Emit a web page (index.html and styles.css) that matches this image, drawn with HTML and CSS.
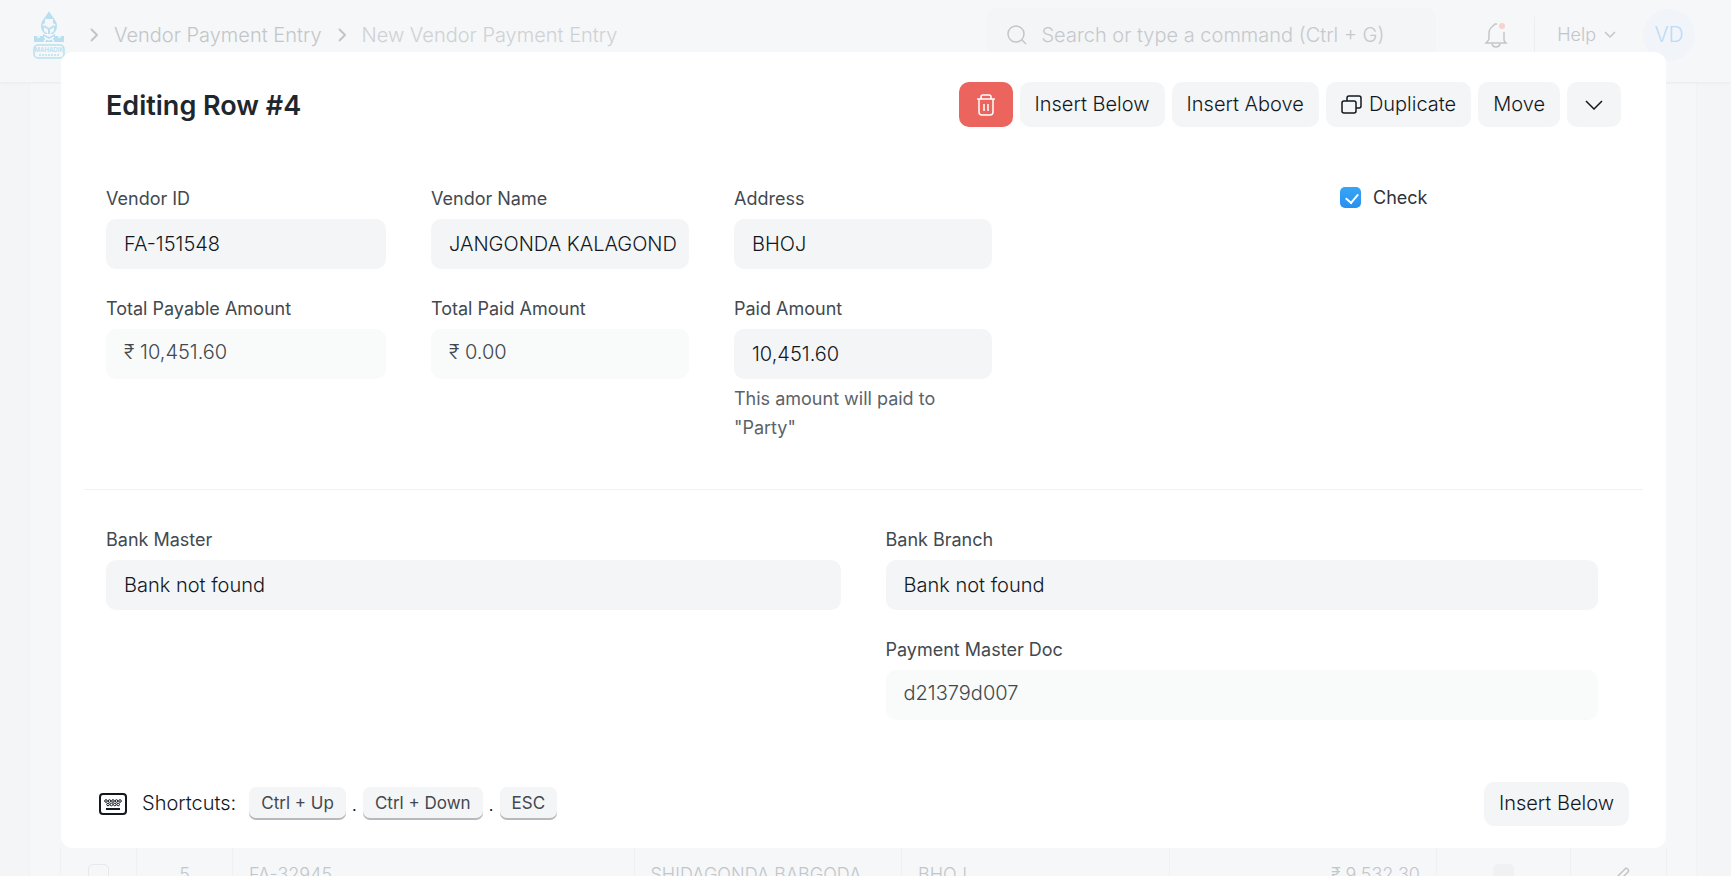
FILE: index.html
```html
<!DOCTYPE html>
<html lang="en">
<head>
<meta charset="utf-8">
<title>New Vendor Payment Entry</title>
<meta name="viewport" content="width=device-width, initial-scale=1">
<link rel="stylesheet" href="styles.css">
</head>
<body>
<header class="navbar">
  <a class="logo" href="#" aria-label="Home">
    <svg width="32" height="48" viewBox="0 0 32 48">
      <path d="M16 0C14 5 8 9 8 15c0 4 2 6 4 8h8c2-2 4-4 4-8C24 9 18 5 16 0z" fill="#b9dff0"/>
      <path d="M12 8h8v4l3 2-2 1v5l-5 4-5-4v-5l-2-1 3-2z" fill="#f5f7f8"/>
      <path d="M11 15l5 3 5-3M16 18v5" fill="none" stroke="#b9dff0" stroke-width="2"/>
      <path d="M1 25h9v-2l6 3 6-3v2h9v6H1z" fill="#b9dff0"/>
      <path d="M4 26h3M11 26l5 3 5-3M25 26h3M11 31l2-3M21 31l-2-3" stroke="#f5f7f8" fill="none"/>
      <rect x="1" y="34" width="30" height="13" rx="4" fill="none" stroke="#b9dff0"/>
      <text x="16" y="41" text-anchor="middle" class="logo-name">MAHADIK</text>
      <path d="M6 44h20" stroke="#c9e6f3" stroke-width="2" stroke-dasharray="2 1"/>
    </svg>
  </a>
  <nav class="crumbs">
    <svg class="sep" width="8" height="14" viewBox="0 0 8 14"><path d="M1 1l6 6-6 6"/></svg>
    <a href="#">Vendor Payment Entry</a>
    <svg class="sep" width="8" height="14" viewBox="0 0 8 14"><path d="M1 1l6 6-6 6"/></svg>
    <a href="#" class="current">New Vendor Payment Entry</a>
  </nav>
  <div class="search">
    <svg width="20" height="20" viewBox="0 0 20 20"><circle cx="9" cy="9" r="8"/><path d="M15 15l4 4"/></svg>
    <input type="search" aria-label="Search" placeholder="Search or type a command (Ctrl + G)">
  </div>
  <button class="bell" aria-label="Notifications">
    <svg width="24" height="26" viewBox="0 0 24 26"><path d="M13 2h-2C10 4 5 5 5 11v5c0 3-1 3-3 5h20c-2-2-2-2-2-5v-6M8 22c1 4 7 4 8 0"/><circle cx="18" cy="4" r="3" class="dot"/></svg>
  </button>
  <button class="help">Help
    <svg width="12" height="8" viewBox="0 0 12 8"><path d="M1 1l5 5 5-5"/></svg>
  </button>
  <button class="avatar">VD</button>
</header>

<main class="page">
  <section class="modal" role="dialog" aria-labelledby="dialog-title">
    <div class="modal-head">
      <h1 id="dialog-title">Editing Row #4</h1>
      <div class="actions">
        <button class="btn danger" aria-label="Delete">
          <svg width="20" height="22" viewBox="0 0 20 22"><path d="M1 5h18M5 5V3c0-1 1-2 2-2h6c1 0 2 1 2 2v2M3 5v13c0 2 1 3 3 3h8c2 0 3-1 3-3V5M8 10v7M12 10v7"/></svg>
        </button>
        <button class="btn">Insert Below</button>
        <button class="btn">Insert Above</button>
        <button class="btn">
          <svg width="21" height="19" viewBox="0 0 21 19"><rect x="1" y="6" width="14" height="12" rx="2"/><path d="M6 6V3c0-1 1-2 2-2h10c1 0 2 1 2 2v8c0 1-1 2-2 2h-3"/></svg>
          Duplicate
        </button>
        <button class="btn">Move</button>
        <button class="btn collapse" aria-label="Collapse">
          <svg width="18" height="10" viewBox="0 0 18 10"><path d="M1 1l8 8 8-8"/></svg>
        </button>
      </div>
    </div>

    <form>
      <div class="section five">
        <div class="column">
          <div class="field"><label for="vid">Vendor ID</label><input id="vid" type="text" value="FA-151548"></div>
          <div class="field"><span class="label">Total Payable Amount</span><div class="readonly">₹ 10,451.60</div></div>
        </div>
        <div class="column">
          <div class="field"><label for="vname">Vendor Name</label><input id="vname" type="text" value="JANGONDA KALAGOND"></div>
          <div class="field"><span class="label">Total Paid Amount</span><div class="readonly">₹ 0.00</div></div>
        </div>
        <div class="column">
          <div class="field"><label for="addr">Address</label><input id="addr" type="text" value="BHOJ"></div>
          <div class="field"><label for="paid">Paid Amount</label><input id="paid" type="text" value="10,451.60">
            <p class="hint">This amount will paid to "Party"</p></div>
        </div>
        <div class="column"></div>
        <div class="column">
          <label class="check"><input type="checkbox" checked>Check</label>
        </div>
      </div>
      <div class="section two">
        <div class="column">
          <div class="field"><label for="bank">Bank Master</label><input id="bank" type="text" value="Bank not found"></div>
        </div>
        <div class="column">
          <div class="field"><label for="branch">Bank Branch</label><input id="branch" type="text" value="Bank not found"></div>
          <div class="field"><span class="label">Payment Master Doc</span><div class="readonly">d21379d007</div></div>
        </div>
      </div>
    </form>

    <div class="modal-foot">
      <div class="shortcuts">
        <svg width="28" height="22" viewBox="0 0 28 22">
          <rect x="1" y="1" width="26" height="20" rx="3" stroke-width="2"/>
          <g stroke-width="1"><circle cx="7" cy="8" r="1.300"/><circle cx="10.500" cy="8" r="1.300"/><circle cx="14" cy="8" r="1.300"/><circle cx="17.500" cy="8" r="1.300"/><circle cx="21" cy="8" r="1.300"/><circle cx="9" cy="11.500" r="1.300"/><circle cx="12.400" cy="11.500" r="1.300"/><circle cx="15.800" cy="11.500" r="1.300"/><circle cx="19.200" cy="11.500" r="1.300"/></g>
          <path d="M7 16h14" stroke-width="2"/>
        </svg>
        <span class="caption">Shortcuts:</span>
        <kbd>Ctrl + Up</kbd><span class="point">.</span><kbd>Ctrl + Down</kbd><span class="point">.</span><kbd>ESC</kbd>
      </div>
      <button class="btn">Insert Below</button>
    </div>
  </section>

  <table class="rows">
    <colgroup><col class="c-pick"><col class="c-no"><col class="c-id"><col class="c-name"><col class="c-name"><col class="c-name"><col class="c-check"><col class="c-edit"></colgroup>
    <tbody>
      <tr>
        <td class="mid"><input type="checkbox" aria-label="Select row 5"></td>
        <td class="mid">5</td>
        <td>FA-32945</td>
        <td>SHIDAGONDA BABGODA</td>
        <td>BHOJ</td>
        <td class="num">₹ 9,532.30</td>
        <td class="mid"><input type="checkbox" class="filled" aria-label="Check" disabled></td>
        <td class="mid"><button class="edit" aria-label="Edit"><svg width="14" height="14" viewBox="0 0 14 14"><path d="M1 13l1-4 7-7c1-2 5 1 3 3l-7 7z"/></svg></button></td>
      </tr>
    </tbody>
  </table>
</main>
</body>
</html>
```
FILE: styles.css
```css
* { box-sizing: border-box; }

body {
  margin: 0;
  height: 100vh;
  overflow: hidden;
  display: flex;
  flex-direction: column;
  background: #f3f5f7;
  color: #12181e;
  font: 300 20px/30px Inter, "Liberation Sans", sans-serif;
}

button, input { font: inherit; color: inherit; }
button { border: 0; background: none; padding: 0; }
a { color: inherit; text-decoration: none; }
svg { fill: none; stroke: currentColor; stroke-width: 1.5; flex: none; display: block; }

/* Top bar */
.navbar {
  flex: none;
  height: 82px;
  padding: 8px 36px 20px 33px;
  display: flex;
  align-items: center;
  background: #f5f7f9;
  box-shadow: 0 1px 3px #e9ebed;
  color: #c3c6c8;
}
.logo svg { stroke: none; }
.logo-name { font-size: 6px; font-weight: 600; fill: #b9dff0; stroke: none; }
.crumbs { display: flex; align-items: center; gap: 16px; margin-left: 25px; margin-right: auto; white-space: nowrap; }
.crumbs .current { color: #cfd2d4; }
.sep { stroke-width: 2; }
.search {
  align-self: flex-start;
  width: 27%;
  height: 54px;
  display: flex;
  align-items: center;
  gap: 14px;
  padding: 0 20px;
  border-radius: 10px;
  background: #f3f5f7;
}
.search input { flex: 1; min-width: 0; border: 0; padding: 0; background: none; outline: 0; }
.search input::placeholder { color: #c6c9cb; opacity: 1; }
.bell { margin: 0 26px 0 48px; }
.bell .dot { fill: #fbd0cd; stroke: none; }
.help {
  display: flex;
  align-items: center;
  gap: 8px;
  height: 36px;
  padding-left: 22px;
  border-left: 1px solid #eceef0;
  font-size: 18px;
}
.avatar {
  width: 52px;
  height: 52px;
  margin-left: 27px;
  border-radius: 50%;
  background: #f1f5f9;
  color: #bcdcf6;
  font-size: 21px;
}

/* Page card behind the dialog */
.page {
  flex: 1 0 auto;
  margin: 2px 34px 0 29px;
  padding: 0 29px 0 30px;
  border: 1px solid #f0f2f3;
  border-width: 0 1px;
  background: #f5f7f9;
}

/* Dialog */
.modal {
  position: relative;
  margin: -32px 1px 0;
  padding: 30px 0 22px;
  border-radius: 12px;
  background: #fff;
}
.modal-head { display: flex; justify-content: space-between; align-items: center; padding: 0 45px; }
h1 { margin: 0; padding-top: 2px; font-size: 27px; font-weight: 600; color: #1f272e; }
.actions { display: flex; gap: 7px; }
.btn {
  display: flex;
  align-items: center;
  gap: 7px;
  height: 45px;
  padding: 0 15px 1px;
  border-radius: 10px;
  background: #f4f5f6;
  white-space: nowrap;
}
.danger { padding: 0 17px; background: #ec645e; color: #fff; }
.collapse { padding: 0 18px; }

.section { display: grid; margin: 0 23px; padding: 35px 22px 22px; }
.five { grid-template-columns: repeat(5, 1fr); margin-top: 22px; }
.two { grid-template-columns: repeat(2, 1fr); border-top: 1px solid #f1f2f4; }
.column { min-width: 0; padding: 0 23px 0 22px; }
.column:first-child { padding-left: 0; }
.field { margin-bottom: 25px; }
.field label, .label { display: block; margin-bottom: 5px; font-size: 18px; font-weight: 400; color: #42494f; }
.field input, .readonly {
  display: block;
  width: 100%;
  height: 50px;
  padding: 0 12px 0 18px;
  border: 0;
  border-radius: 10px;
  background: #f4f5f7;
}
.readonly { padding-top: 8px; background: #f9fafa; color: #40494f; }
.hint { margin: 5px 0 0; font-size: 18px; font-weight: 400; line-height: 29px; color: #5a636a; }

.check { display: flex; align-items: center; gap: 12px; font-size: 18px; font-weight: 400; line-height: 27px; color: #2c343a; }
.check input {
  appearance: none;
  width: 21px;
  height: 21px;
  margin: 0;
  padding: 6px;
  border-radius: 5px;
  background: linear-gradient(#36a5f7, #2a8fee);
}
.check input::after {
  content: "";
  display: block;
  width: 10px;
  height: 6px;
  border: solid #fff;
  border-width: 0 0 2px 2px;
  transform: rotate(-50deg);
}

.modal-foot { display: flex; justify-content: space-between; align-items: center; padding: 15px 37px 0 38px; }
.modal-foot .btn { height: 44px; padding-bottom: 2px; }
.shortcuts { display: flex; align-items: center; }
.caption { margin: 0 13px 0 15px; padding-bottom: 2px; }
.point { width: 17px; text-align: center; }
kbd {
  height: 31px;
  margin-bottom: 3px;
  padding: 0 12px;
  border-radius: 7px;
  background: #f4f5f6;
  box-shadow: 0 2px 0 #b8b9ba;
  color: #42494f;
  font: 400 17px/33px Inter, "Liberation Sans", sans-serif;
}

/* Grid rows */
.rows { width: 100%; table-layout: fixed; border-collapse: collapse; font-size: 18px; color: #c3c6c8; }
.c-pick { width: 76px; }
.c-no { width: 96px; }
.c-id { width: 25%; }
.c-check { width: 134px; }
.c-edit { width: 96px; }
.rows td { height: 54px; padding: 0 16px; border: 1px solid #eff1f3; border-top-width: 0; white-space: nowrap; }
.rows .mid { padding: 0; text-align: center; }
.rows .num { text-align: right; }
.rows input {
  appearance: none;
  display: block;
  width: 21px;
  height: 21px;
  margin: 0 auto;
  border: 1px solid #e6e8ea;
  border-radius: 5px;
}
.rows .filled { background: #eff1f3; border-color: #eff1f3; }
.edit { padding: 8px 0 0 8px; }
```
